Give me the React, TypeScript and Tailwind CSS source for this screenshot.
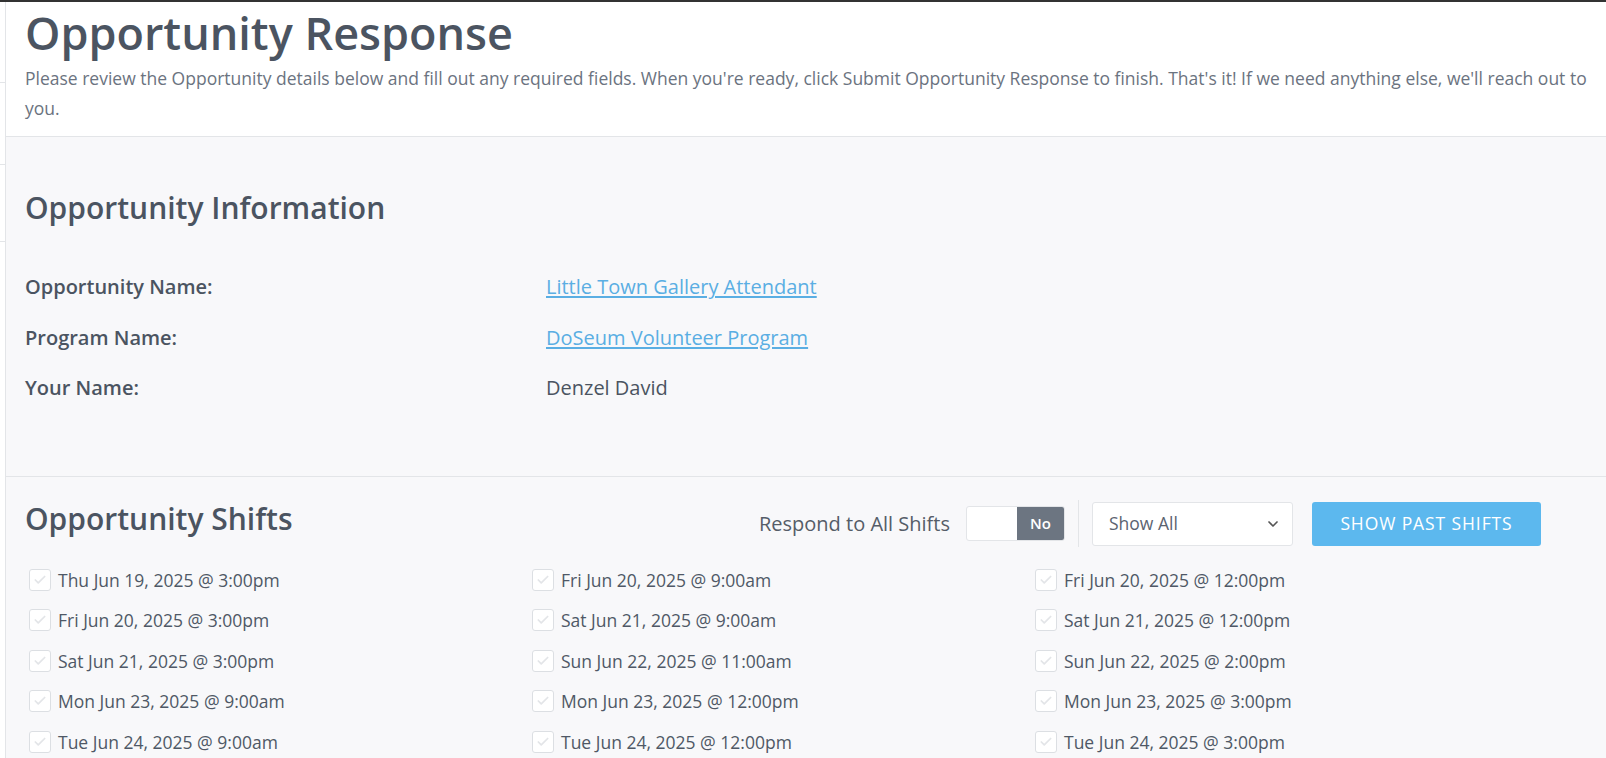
import { ChevronDown, Check } from "lucide-react";

const shifts = [
  "Thu Jun 19, 2025 @ 3:00pm",
  "Fri Jun 20, 2025 @ 9:00am",
  "Fri Jun 20, 2025 @ 12:00pm",
  "Fri Jun 20, 2025 @ 3:00pm",
  "Sat Jun 21, 2025 @ 9:00am",
  "Sat Jun 21, 2025 @ 12:00pm",
  "Sat Jun 21, 2025 @ 3:00pm",
  "Sun Jun 22, 2025 @ 11:00am",
  "Sun Jun 22, 2025 @ 2:00pm",
  "Mon Jun 23, 2025 @ 9:00am",
  "Mon Jun 23, 2025 @ 12:00pm",
  "Mon Jun 23, 2025 @ 3:00pm",
  "Tue Jun 24, 2025 @ 9:00am",
  "Tue Jun 24, 2025 @ 12:00pm",
  "Tue Jun 24, 2025 @ 3:00pm",
];

function InfoRow({ label, children }: { label: string; children: React.ReactNode }) {
  return (
    <div className="flex h-[50.5px] items-center text-[20px]">
      <div className="w-[521px] font-semibold text-[#4b5461]">{label}</div>
      <div className="text-[#4b5461]">{children}</div>
    </div>
  );
}

export default function App() {
  return (
    <div
      className="flex h-[758px] w-[1606px] overflow-hidden border-t-2 border-[#333]"
      style={{ fontFamily: '"Open Sans", "Noto Sans", sans-serif' }}
    >
      {/* strip of the sidebar behind */}
      <div className="flex w-[6px] shrink-0 flex-col border-r border-[#e3e5e8] bg-white">
        <div className="mt-[80px] h-px bg-[#e3e5e8]" />
        <div className="mt-[81px] h-px bg-[#e3e5e8]" />
        <div className="mt-[76px] h-px bg-[#e3e5e8]" />
      </div>

      <div className="flex flex-1 flex-col bg-[#f8f8fa]">
        <header className="border-b border-[#e3e5e8] bg-white pb-[13px] pl-[19px] pr-[6px] pt-[3px]">
          <h1 className="text-[45px] font-semibold leading-[56px] text-[#4b5461]">Opportunity Response</h1>
          <p className="mt-[2px] text-[17.5px] leading-[30px] text-[#6b7380]">
            Please review the Opportunity details below and fill out any required fields. When you're ready, click Submit
            Opportunity Response to finish. That's it! If we need anything else, we'll reach out to you.
          </p>
        </header>

        <section className="border-b border-[#e3e5e8] pb-[62px] pl-[19px] pt-[50px]">
          <h2 className="mb-[33px] text-[30px] font-semibold leading-[42px] text-[#4b5461]">Opportunity Information</h2>
          <InfoRow label="Opportunity Name:">
            <a href="#" className="text-[#5aaee3] underline underline-offset-2">
              Little Town Gallery Attendant
            </a>
          </InfoRow>
          <InfoRow label="Program Name:">
            <a href="#" className="text-[#5aaee3] underline underline-offset-2">
              DoSeum Volunteer Program
            </a>
          </InfoRow>
          <InfoRow label="Your Name:">Denzel David</InfoRow>
        </section>

        <section className="pl-[19px] pt-[25px]">
          <div className="flex h-[44px] w-[1516px] items-center">
            <h2 className="mb-[10px] flex-1 text-[30px] font-semibold leading-[42px] text-[#4b5461]">Opportunity Shifts</h2>
            <span className="mr-[16px] text-[20px] text-[#555d68]">Respond to All Shifts</span>
            <div className="flex h-[35px] w-[99px] overflow-hidden rounded-[3px] border border-[#e3e5e8] bg-white">
              <div className="w-[50px]" />
              <div className="flex flex-1 items-center justify-center bg-[#6c7581] text-[15px] font-semibold text-white">
                No
              </div>
            </div>
            <div className="mx-[13px] h-[47px] w-px bg-[#e3e5e8]" />
            <div className="flex h-[44px] w-[201px] items-center justify-between rounded-[3px] border border-[#e3e5e8] bg-white pl-[16px] pr-[11px] text-[17.5px] text-[#5b6370]">
              <span>Show All</span>
              <ChevronDown size={16} strokeWidth={2.5} className="text-[#555]" />
            </div>
            <button className="ml-[19px] h-[44px] w-[229px] rounded-[3px] bg-[#5cb8ee] text-[17.5px] font-medium tracking-[0.9px] text-white">
              SHOW PAST SHIFTS
            </button>
          </div>

          <div className="mt-[14px] grid grid-cols-[503px_503px_503px]">
            {shifts.map((s) => (
              <label key={s} className="flex h-[40.5px] items-center pl-[4px]">
                <span className="mr-[7px] flex h-[22px] w-[22px] items-center justify-center rounded-[3px] border border-[#dcdfe3] bg-white">
                  <Check size={14} strokeWidth={3} className="text-[#e3e5e8]" />
                </span>
                <span className="text-[17.5px] text-[#4f5866]">{s}</span>
              </label>
            ))}
          </div>
        </section>
      </div>
    </div>
  );
}
